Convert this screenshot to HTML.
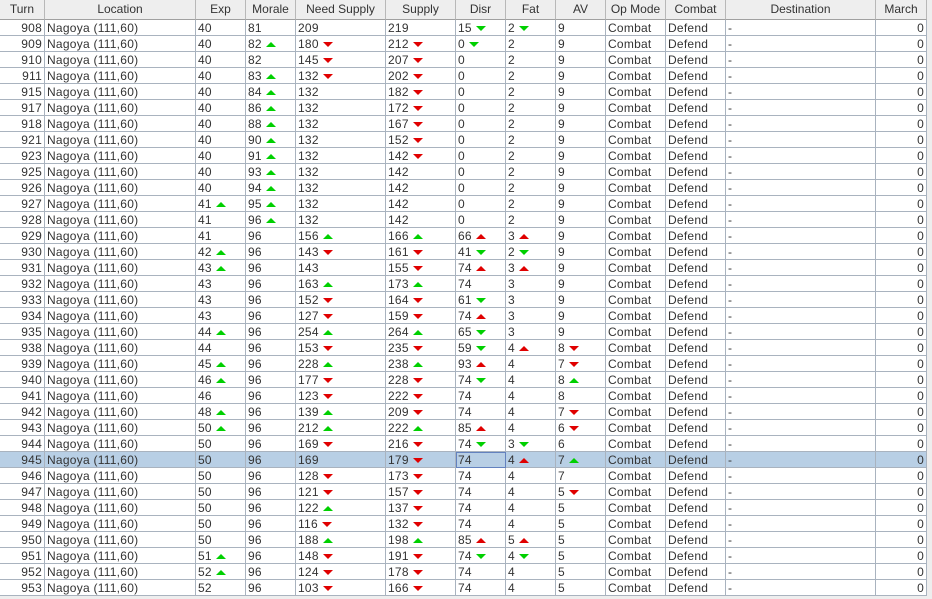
<!DOCTYPE html>
<html><head><meta charset="utf-8"><style>
*{margin:0;padding:0;box-sizing:border-box}
body{width:932px;height:599px;background:#eeeeee;font-family:"Liberation Sans",sans-serif;font-size:12px;color:#333;overflow:hidden;position:relative}
#t{position:absolute;left:0;top:0;width:927px;background:#fff}
.r{display:flex;height:16px;line-height:16px}
.r>div{border-right:1px solid #a9b3bf;border-bottom:1px solid #a9b3bf;padding:0 2px 0 2px;white-space:nowrap;overflow:hidden;height:16px;letter-spacing:0.25px}
.h{height:20px;line-height:19px;background:#eeeeee}
.h>div{height:20px;text-align:center;color:#333;border-right:1px solid #b8b8b8!important;border-bottom:1px solid #a0a0a0!important;letter-spacing:0}
.r>div:nth-child(1){width:45px;text-align:right}
.r>div:nth-child(2){width:151px}
.r>div:nth-child(3){width:50px}
.r>div:nth-child(4){width:50px}
.r>div:nth-child(5){width:90px}
.r>div:nth-child(6){width:70px}
.r>div:nth-child(7){width:50px}
.r>div:nth-child(8){width:50px}
.r>div:nth-child(9){width:50px}
.r>div:nth-child(10){width:60px}
.r>div:nth-child(11){width:60px}
.r>div:nth-child(12){width:150px}
.r>div:nth-child(13){width:51px;text-align:right}
.h>div:nth-child(1),.h>div:nth-child(13){text-align:center}
.s{background:#b8cfe5}
.f{outline:1px solid #6382bf;outline-offset:-1px}
i{display:inline-block;width:0;height:0;margin-left:4px;vertical-align:1px;border-left:5px solid transparent;border-right:5px solid transparent}
.gu{border-bottom:5px solid #00d000}
.ru{border-bottom:5px solid #e00000}
.rd{border-top:5px solid #e00000}
.gd{border-top:5px solid #00d000}
</style></head><body><div id="t">
<div class="r h"><div>Turn</div><div>Location</div><div>Exp</div><div>Morale</div><div>Need Supply</div><div>Supply</div><div>Disr</div><div>Fat</div><div>AV</div><div>Op Mode</div><div>Combat</div><div>Destination</div><div>March</div></div>
<div class="r"><div>908</div><div>Nagoya (111,60)</div><div>40</div><div>81</div><div>209</div><div>219</div><div>15<i class="gd"></i></div><div>2<i class="gd"></i></div><div>9</div><div>Combat</div><div>Defend</div><div>-</div><div>0</div></div>
<div class="r"><div>909</div><div>Nagoya (111,60)</div><div>40</div><div>82<i class="gu"></i></div><div>180<i class="rd"></i></div><div>212<i class="rd"></i></div><div>0<i class="gd"></i></div><div>2</div><div>9</div><div>Combat</div><div>Defend</div><div>-</div><div>0</div></div>
<div class="r"><div>910</div><div>Nagoya (111,60)</div><div>40</div><div>82</div><div>145<i class="rd"></i></div><div>207<i class="rd"></i></div><div>0</div><div>2</div><div>9</div><div>Combat</div><div>Defend</div><div>-</div><div>0</div></div>
<div class="r"><div>911</div><div>Nagoya (111,60)</div><div>40</div><div>83<i class="gu"></i></div><div>132<i class="rd"></i></div><div>202<i class="rd"></i></div><div>0</div><div>2</div><div>9</div><div>Combat</div><div>Defend</div><div>-</div><div>0</div></div>
<div class="r"><div>915</div><div>Nagoya (111,60)</div><div>40</div><div>84<i class="gu"></i></div><div>132</div><div>182<i class="rd"></i></div><div>0</div><div>2</div><div>9</div><div>Combat</div><div>Defend</div><div>-</div><div>0</div></div>
<div class="r"><div>917</div><div>Nagoya (111,60)</div><div>40</div><div>86<i class="gu"></i></div><div>132</div><div>172<i class="rd"></i></div><div>0</div><div>2</div><div>9</div><div>Combat</div><div>Defend</div><div>-</div><div>0</div></div>
<div class="r"><div>918</div><div>Nagoya (111,60)</div><div>40</div><div>88<i class="gu"></i></div><div>132</div><div>167<i class="rd"></i></div><div>0</div><div>2</div><div>9</div><div>Combat</div><div>Defend</div><div>-</div><div>0</div></div>
<div class="r"><div>921</div><div>Nagoya (111,60)</div><div>40</div><div>90<i class="gu"></i></div><div>132</div><div>152<i class="rd"></i></div><div>0</div><div>2</div><div>9</div><div>Combat</div><div>Defend</div><div>-</div><div>0</div></div>
<div class="r"><div>923</div><div>Nagoya (111,60)</div><div>40</div><div>91<i class="gu"></i></div><div>132</div><div>142<i class="rd"></i></div><div>0</div><div>2</div><div>9</div><div>Combat</div><div>Defend</div><div>-</div><div>0</div></div>
<div class="r"><div>925</div><div>Nagoya (111,60)</div><div>40</div><div>93<i class="gu"></i></div><div>132</div><div>142</div><div>0</div><div>2</div><div>9</div><div>Combat</div><div>Defend</div><div>-</div><div>0</div></div>
<div class="r"><div>926</div><div>Nagoya (111,60)</div><div>40</div><div>94<i class="gu"></i></div><div>132</div><div>142</div><div>0</div><div>2</div><div>9</div><div>Combat</div><div>Defend</div><div>-</div><div>0</div></div>
<div class="r"><div>927</div><div>Nagoya (111,60)</div><div>41<i class="gu"></i></div><div>95<i class="gu"></i></div><div>132</div><div>142</div><div>0</div><div>2</div><div>9</div><div>Combat</div><div>Defend</div><div>-</div><div>0</div></div>
<div class="r"><div>928</div><div>Nagoya (111,60)</div><div>41</div><div>96<i class="gu"></i></div><div>132</div><div>142</div><div>0</div><div>2</div><div>9</div><div>Combat</div><div>Defend</div><div>-</div><div>0</div></div>
<div class="r"><div>929</div><div>Nagoya (111,60)</div><div>41</div><div>96</div><div>156<i class="gu"></i></div><div>166<i class="gu"></i></div><div>66<i class="ru"></i></div><div>3<i class="ru"></i></div><div>9</div><div>Combat</div><div>Defend</div><div>-</div><div>0</div></div>
<div class="r"><div>930</div><div>Nagoya (111,60)</div><div>42<i class="gu"></i></div><div>96</div><div>143<i class="rd"></i></div><div>161<i class="rd"></i></div><div>41<i class="gd"></i></div><div>2<i class="gd"></i></div><div>9</div><div>Combat</div><div>Defend</div><div>-</div><div>0</div></div>
<div class="r"><div>931</div><div>Nagoya (111,60)</div><div>43<i class="gu"></i></div><div>96</div><div>143</div><div>155<i class="rd"></i></div><div>74<i class="ru"></i></div><div>3<i class="ru"></i></div><div>9</div><div>Combat</div><div>Defend</div><div>-</div><div>0</div></div>
<div class="r"><div>932</div><div>Nagoya (111,60)</div><div>43</div><div>96</div><div>163<i class="gu"></i></div><div>173<i class="gu"></i></div><div>74</div><div>3</div><div>9</div><div>Combat</div><div>Defend</div><div>-</div><div>0</div></div>
<div class="r"><div>933</div><div>Nagoya (111,60)</div><div>43</div><div>96</div><div>152<i class="rd"></i></div><div>164<i class="rd"></i></div><div>61<i class="gd"></i></div><div>3</div><div>9</div><div>Combat</div><div>Defend</div><div>-</div><div>0</div></div>
<div class="r"><div>934</div><div>Nagoya (111,60)</div><div>43</div><div>96</div><div>127<i class="rd"></i></div><div>159<i class="rd"></i></div><div>74<i class="ru"></i></div><div>3</div><div>9</div><div>Combat</div><div>Defend</div><div>-</div><div>0</div></div>
<div class="r"><div>935</div><div>Nagoya (111,60)</div><div>44<i class="gu"></i></div><div>96</div><div>254<i class="gu"></i></div><div>264<i class="gu"></i></div><div>65<i class="gd"></i></div><div>3</div><div>9</div><div>Combat</div><div>Defend</div><div>-</div><div>0</div></div>
<div class="r"><div>938</div><div>Nagoya (111,60)</div><div>44</div><div>96</div><div>153<i class="rd"></i></div><div>235<i class="rd"></i></div><div>59<i class="gd"></i></div><div>4<i class="ru"></i></div><div>8<i class="rd"></i></div><div>Combat</div><div>Defend</div><div>-</div><div>0</div></div>
<div class="r"><div>939</div><div>Nagoya (111,60)</div><div>45<i class="gu"></i></div><div>96</div><div>228<i class="gu"></i></div><div>238<i class="gu"></i></div><div>93<i class="ru"></i></div><div>4</div><div>7<i class="rd"></i></div><div>Combat</div><div>Defend</div><div>-</div><div>0</div></div>
<div class="r"><div>940</div><div>Nagoya (111,60)</div><div>46<i class="gu"></i></div><div>96</div><div>177<i class="rd"></i></div><div>228<i class="rd"></i></div><div>74<i class="gd"></i></div><div>4</div><div>8<i class="gu"></i></div><div>Combat</div><div>Defend</div><div>-</div><div>0</div></div>
<div class="r"><div>941</div><div>Nagoya (111,60)</div><div>46</div><div>96</div><div>123<i class="rd"></i></div><div>222<i class="rd"></i></div><div>74</div><div>4</div><div>8</div><div>Combat</div><div>Defend</div><div>-</div><div>0</div></div>
<div class="r"><div>942</div><div>Nagoya (111,60)</div><div>48<i class="gu"></i></div><div>96</div><div>139<i class="gu"></i></div><div>209<i class="rd"></i></div><div>74</div><div>4</div><div>7<i class="rd"></i></div><div>Combat</div><div>Defend</div><div>-</div><div>0</div></div>
<div class="r"><div>943</div><div>Nagoya (111,60)</div><div>50<i class="gu"></i></div><div>96</div><div>212<i class="gu"></i></div><div>222<i class="gu"></i></div><div>85<i class="ru"></i></div><div>4</div><div>6<i class="rd"></i></div><div>Combat</div><div>Defend</div><div>-</div><div>0</div></div>
<div class="r"><div>944</div><div>Nagoya (111,60)</div><div>50</div><div>96</div><div>169<i class="rd"></i></div><div>216<i class="rd"></i></div><div>74<i class="gd"></i></div><div>3<i class="gd"></i></div><div>6</div><div>Combat</div><div>Defend</div><div>-</div><div>0</div></div>
<div class="r s"><div>945</div><div>Nagoya (111,60)</div><div>50</div><div>96</div><div>169</div><div>179<i class="rd"></i></div><div class="f">74</div><div>4<i class="ru"></i></div><div>7<i class="gu"></i></div><div>Combat</div><div>Defend</div><div>-</div><div>0</div></div>
<div class="r"><div>946</div><div>Nagoya (111,60)</div><div>50</div><div>96</div><div>128<i class="rd"></i></div><div>173<i class="rd"></i></div><div>74</div><div>4</div><div>7</div><div>Combat</div><div>Defend</div><div>-</div><div>0</div></div>
<div class="r"><div>947</div><div>Nagoya (111,60)</div><div>50</div><div>96</div><div>121<i class="rd"></i></div><div>157<i class="rd"></i></div><div>74</div><div>4</div><div>5<i class="rd"></i></div><div>Combat</div><div>Defend</div><div>-</div><div>0</div></div>
<div class="r"><div>948</div><div>Nagoya (111,60)</div><div>50</div><div>96</div><div>122<i class="gu"></i></div><div>137<i class="rd"></i></div><div>74</div><div>4</div><div>5</div><div>Combat</div><div>Defend</div><div>-</div><div>0</div></div>
<div class="r"><div>949</div><div>Nagoya (111,60)</div><div>50</div><div>96</div><div>116<i class="rd"></i></div><div>132<i class="rd"></i></div><div>74</div><div>4</div><div>5</div><div>Combat</div><div>Defend</div><div>-</div><div>0</div></div>
<div class="r"><div>950</div><div>Nagoya (111,60)</div><div>50</div><div>96</div><div>188<i class="gu"></i></div><div>198<i class="gu"></i></div><div>85<i class="ru"></i></div><div>5<i class="ru"></i></div><div>5</div><div>Combat</div><div>Defend</div><div>-</div><div>0</div></div>
<div class="r"><div>951</div><div>Nagoya (111,60)</div><div>51<i class="gu"></i></div><div>96</div><div>148<i class="rd"></i></div><div>191<i class="rd"></i></div><div>74<i class="gd"></i></div><div>4<i class="gd"></i></div><div>5</div><div>Combat</div><div>Defend</div><div>-</div><div>0</div></div>
<div class="r"><div>952</div><div>Nagoya (111,60)</div><div>52<i class="gu"></i></div><div>96</div><div>124<i class="rd"></i></div><div>178<i class="rd"></i></div><div>74</div><div>4</div><div>5</div><div>Combat</div><div>Defend</div><div>-</div><div>0</div></div>
<div class="r"><div>953</div><div>Nagoya (111,60)</div><div>52</div><div>96</div><div>103<i class="rd"></i></div><div>166<i class="rd"></i></div><div>74</div><div>4</div><div>5</div><div>Combat</div><div>Defend</div><div>-</div><div>0</div></div>
</div></body></html>
